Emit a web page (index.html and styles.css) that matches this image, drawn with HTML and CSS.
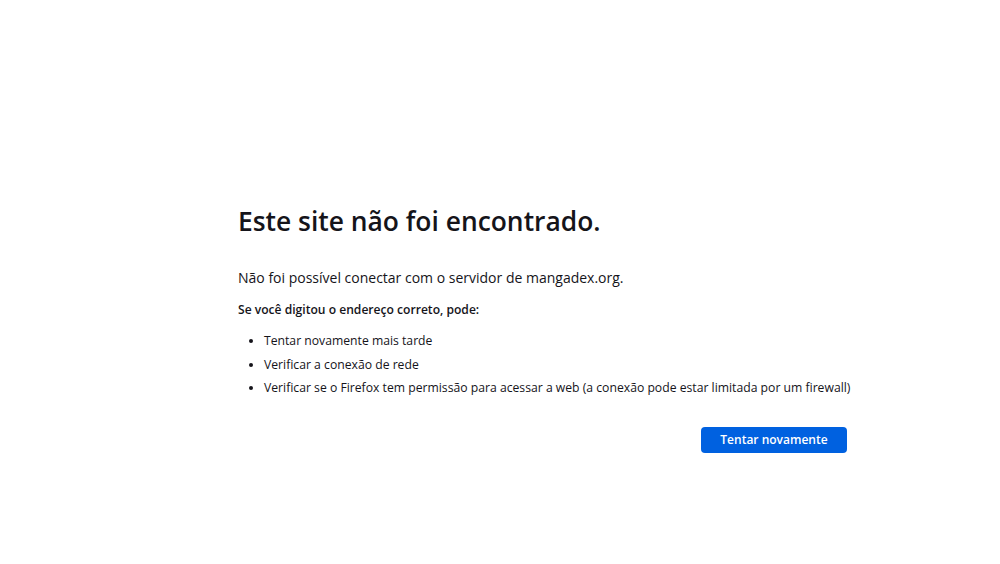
FILE: index.html
```html
<!DOCTYPE html>
<html lang="pt-BR">
<head>
<meta charset="utf-8">
<title>Problema ao carregar a página</title>
<link rel="stylesheet" href="styles.css">
</head>
<body>
<main class="container">
  <h1 class="title">Este site não foi encontrado.</h1>
  <p class="desc">Não foi possível conectar com o servidor de mangadex.org.</p>
  <p class="lead">Se você digitou o endereço correto, pode:</p>
  <ul class="list">
    <li>Tentar novamente mais tarde</li>
    <li>Verificar a conexão de rede</li>
    <li>Verificar se o Firefox tem permissão para acessar a web (a conexão pode estar limitada por um firewall)</li>
  </ul>
  <div class="actions">
    <button class="btn" type="button">Tentar novamente</button>
  </div>
</main>
</body>
</html>
```
FILE: styles.css
```css
* { box-sizing: border-box; }
html, body { margin: 0; padding: 0; background: #fff; }
body {
  font-family: "Open Sans", "Noto Sans", sans-serif;
  color: #15141a;
  height: 564px;
}
.container {
  width: 609px;
  margin-left: 238px;
  padding-top: 200px;
}
.title {
  margin: 0;
  font-size: 26.4px;
  font-weight: 600;
  line-height: 42px;
}
.desc {
  margin: 25px 0 0;
  font-size: 14px;
  line-height: 22px;
}
.lead {
  margin: 11px 0 0;
  font-size: 12.1px;
  font-weight: 600;
  line-height: 20px;
}
.list {
  margin: 9px 0 0;
  padding-left: 26px;
  font-size: 12.2px;
  line-height: 23.5px;
}
.list li { white-space: nowrap; }
.actions {
  display: flex;
  justify-content: flex-end;
  margin-top: 27px;
}
.btn {
  font-family: inherit;
  font-size: 12px;
  font-weight: 600;
  color: #fff;
  background: #0061e0;
  border: none;
  border-radius: 4px;
  width: 146px;
  height: 26px;
  padding: 0;
}
```
